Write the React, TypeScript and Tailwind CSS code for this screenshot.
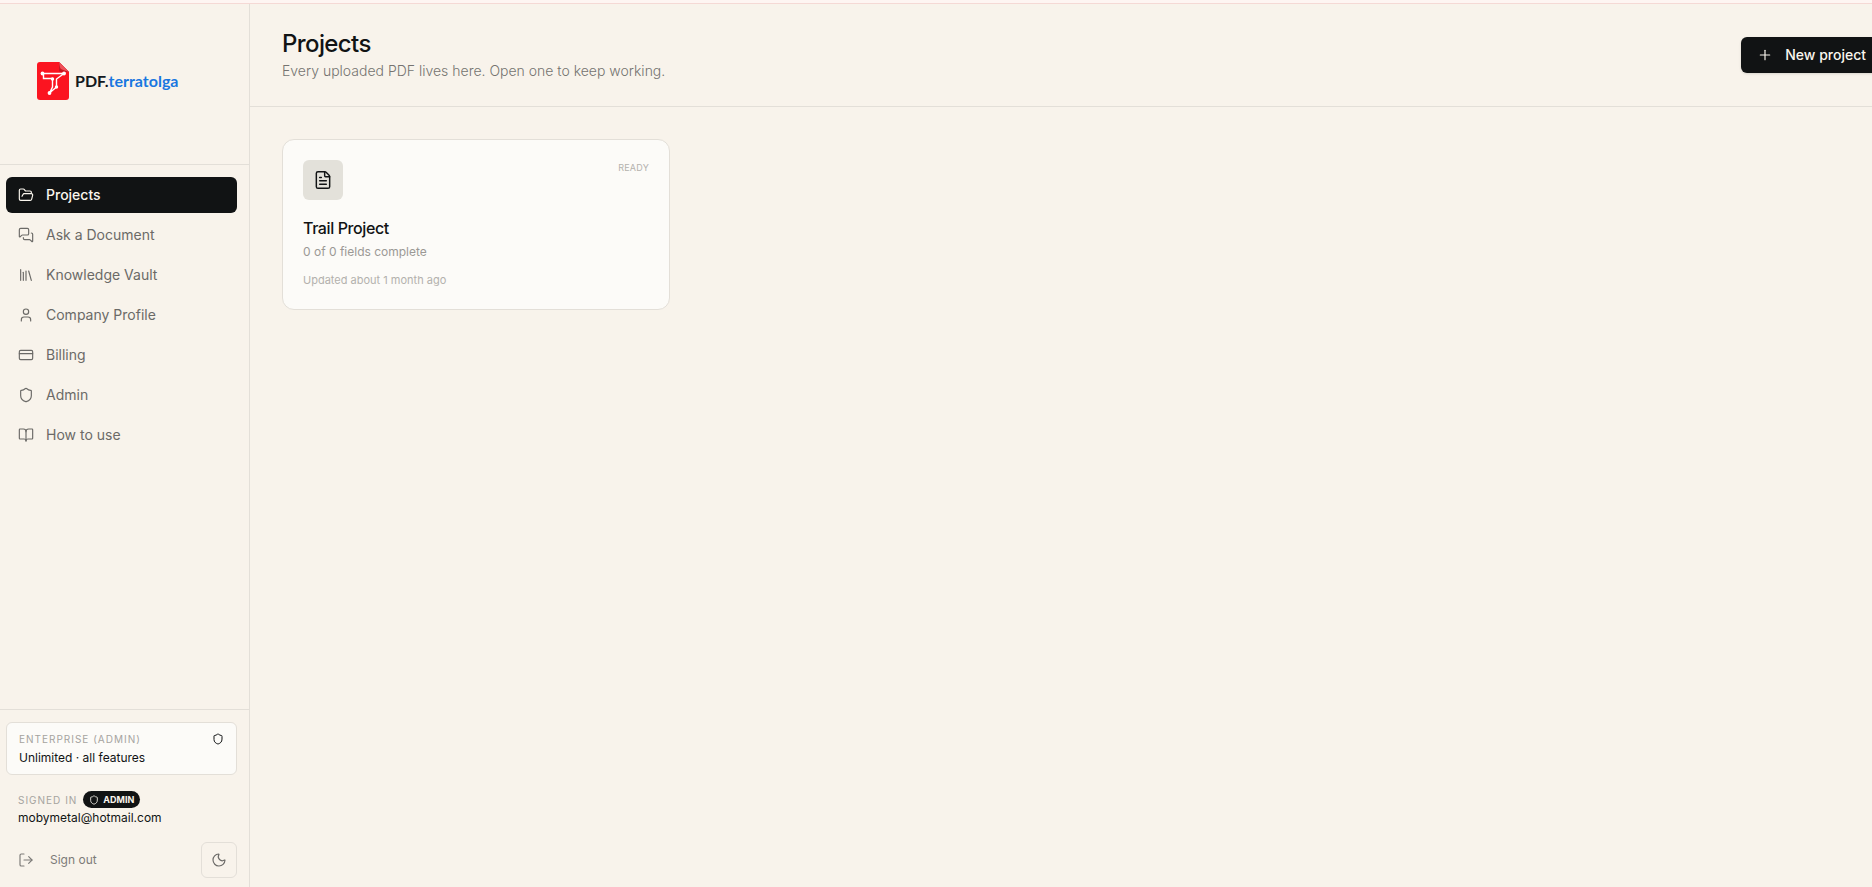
import type { LucideIcon } from 'lucide-react';
import {
  BookOpen,
  CreditCard,
  FileText,
  FolderOpen,
  Library,
  LogOut,
  MessagesSquare,
  Moon,
  Plus,
  Shield,
  User,
} from 'lucide-react';
import clsx from 'clsx';

interface NavItem {
  label: string;
  icon: LucideIcon;
  active?: boolean;
}

const navItems: NavItem[] = [
  { label: 'Projects', icon: FolderOpen, active: true },
  { label: 'Ask a Document', icon: MessagesSquare },
  { label: 'Knowledge Vault', icon: Library },
  { label: 'Company Profile', icon: User },
  { label: 'Billing', icon: CreditCard },
  { label: 'Admin', icon: Shield },
  { label: 'How to use', icon: BookOpen },
];

const projects = [
  { name: 'Trail Project', status: 'Ready', progress: '0 of 0 fields complete', updated: 'Updated about 1 month ago' },
];

function Logo() {
  return (
    <a href="#" className="flex items-center gap-1" aria-label="PDF.terratolga">
      <svg width="34" height="40" viewBox="0 0 34 40" fill="none">
        <path d="M3 1h19l10 10v25a3 3 0 0 1-3 3H3a3 3 0 0 1-3-3V4a3 3 0 0 1 3-3Z" fill="#fb1420" />
        <path d="M22 1l10 10h-8a2 2 0 0 1-2-2V1Z" fill="#c81420" />
        <path d="M22 1l10 10-7-2.500a3 3 0 0 1-2-2L22 1Z" fill="#ee5058" />
        <path d="M5.500 12.500H27l-7.500 5.500v8L12.500 32 15.500 26V17.500H6.500v-5" stroke="#fff" strokeWidth="1.400" />
        <circle cx="5.500" cy="12.500" r="1.900" fill="#fff" />
        <circle cx="27" cy="12.500" r="1.900" fill="#fff" />
        <circle cx="15.500" cy="18" r="1.700" fill="#fff" />
        <circle cx="19.500" cy="26" r="1.700" fill="#fff" />
        <circle cx="12.500" cy="32" r="1.900" fill="#fff" />
      </svg>
      <span className="font-[Lato,sans-serif] text-base font-bold text-[#141820]">
        PDF.<span className="text-[#1877e0]">terratolga</span>
      </span>
    </a>
  );
}

function Sidebar() {
  return (
    <aside className="flex w-64 shrink-0 flex-col border-r border-[#e3dfd8]">
      <div className="flex h-[161px] items-center border-b border-[#e3dfd8] pb-1.5 pl-[43px]">
        <Logo />
      </div>

      <nav className="flex flex-1 flex-col gap-1 p-3">
        {navItems.map(({ label, icon: Icon, active }) => (
          <a
            key={label}
            href="#"
            className={clsx(
              'flex h-9 items-center gap-3 rounded-md px-3 text-sm',
              active ? 'bg-[#111314] font-medium text-[#faf6ee]' : 'text-[#6b6a67]',
            )}
          >
            <Icon size={16} strokeWidth={1.75} />
            {label}
          </a>
        ))}
      </nav>

      <div className="border-t border-[#e3dfd8] p-3">
        <div className="rounded-md border border-[#e3dfd8] bg-[#fcfbf8] px-3 py-2">
          <div className="flex items-center justify-between">
            <span className="text-[10px] leading-4 tracking-widest text-[#a5a39f] uppercase">Enterprise (Admin)</span>
            <Shield size={12} className="text-[#111314]" />
          </div>
          <p className="mt-[3px] text-xs leading-4 text-[#111314]">Unlimited · all features</p>
        </div>

        <div className="mt-4 px-3">
          <div className="flex items-center gap-1.5">
            <span className="text-[10px] leading-4 tracking-widest text-[#a5a39f] uppercase">Signed in</span>
            <span className="flex h-[17px] items-center gap-1 rounded-full bg-[#111314] px-1.5 text-[9px] font-bold text-[#faf6ee] uppercase">
              <Shield size={10} />
              Admin
            </span>
          </div>
          <p className="mt-0.5 text-xs leading-4 text-[#111314]">mobymetal@hotmail.com</p>
        </div>

        <div className="mt-4 flex items-center justify-between">
          <button className="flex h-9 items-center gap-4 px-3 text-xs text-[#7d7b78]">
            <LogOut size={16} strokeWidth={1.75} />
            Sign out
          </button>
          <button
            aria-label="Toggle theme"
            className="flex size-9 items-center justify-center rounded-md border border-[#e3dfd8] text-[#6b6a67]"
          >
            <Moon size={16} strokeWidth={1.75} />
          </button>
        </div>
      </div>
    </aside>
  );
}

export default function App() {
  return (
    <div className="flex h-screen flex-col overflow-hidden bg-[#f8f3eb] font-[Inter,sans-serif] text-[#111314]">
      <div className="h-1 shrink-0 border-b border-[#f5d9d5] bg-[#fef5f2]" />

      {/* The shell is wider than the viewport and sits slightly scrolled */}
      <div className="-mr-[42px] -ml-1.5 flex h-[calc(100%-1px)] shrink-0">
        <Sidebar />

        <main className="min-w-0 flex-1">
          <header className="flex items-center justify-between border-b border-[#e3dfd8] px-8 py-6">
            <div>
              <h1 className="text-2xl font-medium tracking-tight">Projects</h1>
              <p className="text-sm leading-[22px] font-light text-[#757370]">Every uploaded PDF lives here. Open one to keep working.</p>
            </div>
            <button className="flex h-9 items-center gap-3 rounded-md bg-[#111314] px-4 text-sm font-medium text-[#faf6ee] shadow-sm">
              <Plus size={16} strokeWidth={1.75} />
              New project
            </button>
          </header>

          <section className="grid grid-cols-4 gap-4 p-8">
            {projects.map((project) => (
              <a key={project.name} href="#" className="rounded-xl border border-[#e3dfd8] bg-[#fcfbf8] p-5">
                <div className="flex items-start justify-between">
                  <div className="flex size-10 items-center justify-center rounded-md bg-[#e3e1da]">
                    <FileText size={20} strokeWidth={1.75} />
                  </div>
                  <span className="text-[9px] leading-4 tracking-wide text-[#b3b1ad] uppercase">{project.status}</span>
                </div>
                <h2 className="mt-4 text-base leading-6 font-medium tracking-tight">{project.name}</h2>
                <p className="mt-1 text-xs leading-4 text-[#9b9995]">{project.progress}</p>
                <p className="mt-3 text-[11px] leading-[17px] text-[#b3b1ad]">{project.updated}</p>
              </a>
            ))}
          </section>
        </main>
      </div>
    </div>
  );
}
